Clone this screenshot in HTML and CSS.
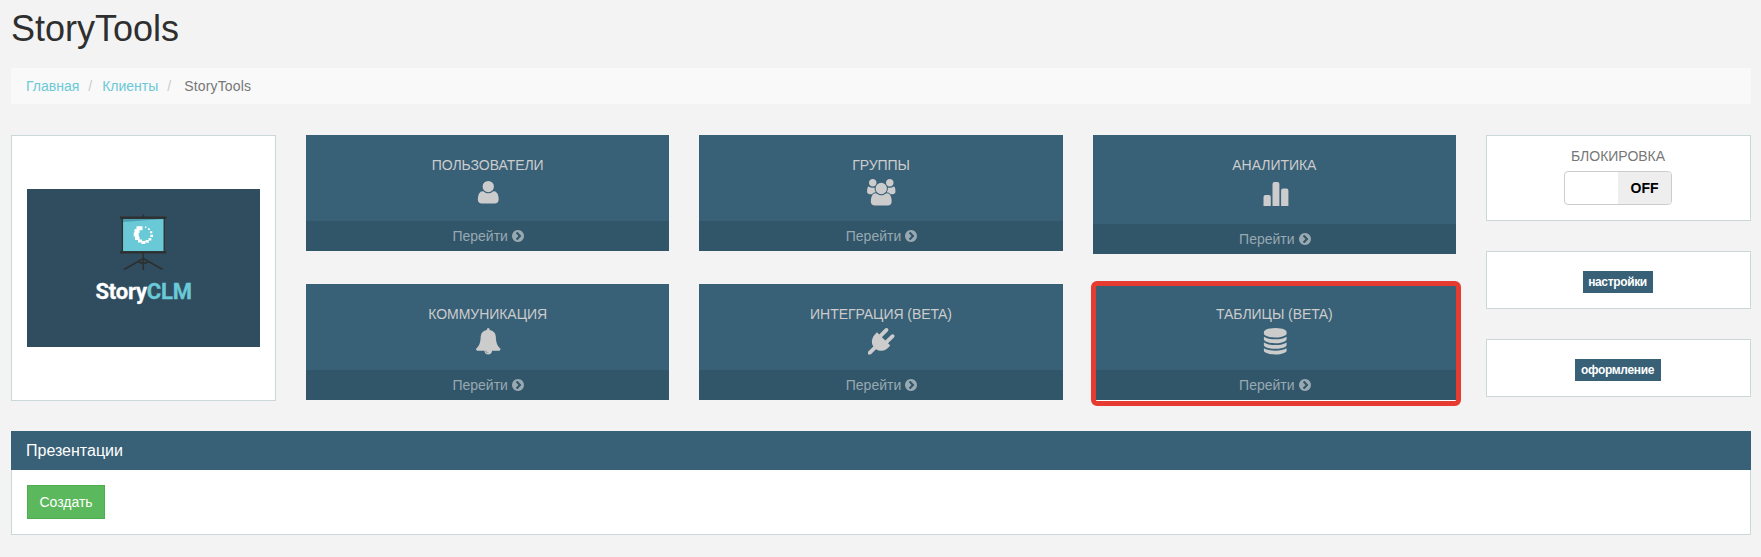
FILE: index.html
```html
<!DOCTYPE html>
<html lang="ru">
<head>
<meta charset="utf-8">
<title>StoryTools</title>
<link rel="stylesheet" href="styles.css">
</head>
<body>
<svg class="defs" width="0" height="0">
  <symbol id="go" viewBox="128 128 1536 1536"><path d="M845 1395l454-454q19-19 19-45t-19-45l-454-454q-19-19-45-19t-45 19l-102 102q-19 19-19 45t19 45l307 307-307 307q-19 19-19 45t19 45l102 102q19 19 45 19t45-19zm819-499q0 209-103 385.500t-279.500 279.500-385.500 103-385.500-103-279.500-279.500-103-385.500 103-385.500 279.500-279.500 385.500-103 385.500 103 279.500 279.500 103 385.500z"/></symbol>
</svg>
<h1 class="title">StoryTools</h1>
<nav class="breadcrumb">
  <a href="#">Главная</a><span class="sep">/</span><a href="#">Клиенты</a><span class="sep sep-last">/</span><span class="current">StoryTools</span>
</nav>
<main class="dashboard">
  <section class="box logo-box">
    <svg class="logo" viewBox="27 189 233 158">
      <path fill="#6ac9d6" d="M122.500 219h41.500v32h-41.500z"/>
      <path fill="#4ca0af" d="M122.500 219h41.500l-41.500 3z"/>
      <g fill="none" stroke="#2e2f2f">
        <path stroke-width="2.300" d="M120 217.700h46.500M120 252.300h46.500"/>
        <path stroke-width="1.300" d="M122.400 218v34M164.200 218v34"/>
        <path stroke-width="1.600" d="M143.300 214.500v3M143.300 253v17M143.300 258.500l-19.300 11M143.300 258.500l19.300 11M138 261.500q5.300 3.500 10.600 0"/>
      </g>
      <g fill="#fff">
        <path d="M136.500 226.200h6v4h-6zM134.500 229h5v4h-5zM133.700 232.500h5v4h-5zM135 236.500h4.500v3.500h-4.500zM138 239.500h4v3h-4zM141.500 241h3.800v3h-3.800zM145.500 240h3.300v2.700h-3.300zM148.500 238h2.800v2.500h-2.800zM150.300 234.700h2.700v2.300h-2.700zM150 231.200h2.300v2h-2.300zM148 228.200h1.800v1.800h-1.800zM145 226.500h1.400v1.400h-1.400z"/>
      </g>
      <text class="logo-text" x="95.400" y="298.900" textLength="96.500">Story<tspan class="logo-accent">CLM</tspan></text>
    </svg>
  </section>
  <section class="cards">
    <a class="card">
      <span class="card-body"><span class="card-title">ПОЛЬЗОВАТЕЛИ</span>
        <svg class="icon" viewBox="0 0 1792 1792"><path d="M1600 1405q0 120-73 189.500t-194 69.500h-874q-121 0-194-69.500t-73-189.500q0-53 3.500-103.500t14-109 26.500-108.500 43-97.500 62-81 85.500-53.500 111.500-20q9 0 42 21.500t74.500 48 108 48 133.500 21.500 133.500-21.500 108-48 74.500-48 42-21.500q61 0 111.500 20t85.500 53.500 62 81 43 97.500 26.500 108.500 14 109 3.500 103.500zm-320-893q0 159-112.500 271.500t-271.500 112.500-271.500-112.500-112.500-271.500 112.500-271.500 271.500-112.500 271.500 112.500 112.500 271.500z"/></svg>
      </span>
      <span class="card-footer">Перейти <svg class="go"><use href="#go"/></svg></span>
    </a>
    <a class="card">
      <span class="card-body"><span class="card-title">ГРУППЫ</span>
        <svg class="icon icon-wide" viewBox="0 0 1920 1792"><path d="M593 896q-162 5-265 128h-134q-82 0-138-40.500t-56-118.500q0-353 124-353 6 0 43.500 21t97.500 42.500 119 21.500q67 0 133-23-5 37-5 66 0 139 81 256zm1071 637q0 120-73 189.500t-194 69.500h-874q-121 0-194-69.500t-73-189.500q0-53 3.500-103.500t14-109 26.500-108.500 43-97.500 62-81 85.500-53.500 111.500-20q10 0 43 21.500t73 48 107 48 135 21.500 135-21.500 107-48 73-48 43-21.500q61 0 111.500 20t85.500 53.500 62 81 43 97.500 26.500 108.500 14 109 3.500 103.500zm-1024-1277q0 106-75 181t-181 75-181-75-75-181 75-181 181-75 181 75 75 181zm704 384q0 159-112.500 271.500t-271.500 112.500-271.500-112.500-112.500-271.500 112.500-271.500 271.500-112.500 271.500 112.500 112.500 271.500zm576 225q0 78-56 118.500t-138 40.500h-134q-103-123-265-128 81-117 81-256 0-29-5-66 66 23 133 23 59 0 119-21.500t97.500-42.500 43.500-21q124 0 124 353zm-128-609q0 106-75 181t-181 75-181-75-75-181 75-181 181-75 181 75 75 181z"/></svg>
      </span>
      <span class="card-footer">Перейти <svg class="go"><use href="#go"/></svg></span>
    </a>
    <a class="card card-tall">
      <span class="card-body"><span class="card-title">АНАЛИТИКА</span>
        <svg class="icon icon-bars" viewBox="0 0 27 27"><path d="M1.500 27V18q0-2 2-2h3.300q2 0 2 2v9zM10.500 27V5q0-2 2-2h2.900q2 0 2 2v22zM19.100 27V11.500q0-2 2-2h3.300q2 0 2 2V27z"/></svg>
      </span>
      <span class="card-footer">Перейти <svg class="go"><use href="#go"/></svg></span>
    </a>
    <a class="card">
      <span class="card-body"><span class="card-title">КОММУНИКАЦИЯ</span>
        <svg class="icon" viewBox="0 0 1792 1792"><path d="M912 1696q0-16-16-16-59 0-101.500-42.500t-42.500-101.500q0-16-16-16t-16 16q0 73 51.500 124.500t124.500 51.500q16 0 16-16zm816-288q0 52-38 90t-90 38h-448q0 106-75 181t-181 75-181-75-75-181h-448q-52 0-90-38t-38-90q50-42 91-88t85-119.500 74.500-158.500 50-206 19.500-260q0-152 117-282.500t307-158.500q-8-19-8-39 0-40 28-68t68-28 68 28 28 68q0 20-8 39 190 28 307 158.500t117 282.500q0 139 19.500 260t50 206 74.500 158.500 85 119.500 91 88z"/></svg>
      </span>
      <span class="card-footer">Перейти <svg class="go"><use href="#go"/></svg></span>
    </a>
    <a class="card">
      <span class="card-body"><span class="card-title">ИНТЕГРАЦИЯ (BETA)</span>
        <svg class="icon" viewBox="0 0 1792 1792"><path d="M1755 453q37 38 37 90.500t-37 90.500l-401 400 150 150-160 160q-163 163-389.500 186.500t-411.500-100.500l-362 362h-181v-181l362-362q-124-185-100.500-411.500t186.500-389.500l160-160 150 150 400-401q38-37 91-37t90 37 37 90.500-37 90.500l-400 401 234 234 401-400q38-37 91-37t90 37z"/></svg>
      </span>
      <span class="card-footer">Перейти <svg class="go"><use href="#go"/></svg></span>
    </a>
    <a class="card card-marked">
      <span class="card-body"><span class="card-title">ТАБЛИЦЫ (BETA)</span>
        <svg class="icon" viewBox="0 0 1792 1792"><path d="M896 768q237 0 443-43t325-127v170q0 69-103 128t-280 93.500-385 34.500-385-34.500-280-93.500-103-128v-170q119 84 325 127t443 43zm0 768q237 0 443-43t325-127v170q0 69-103 128t-280 93.500-385 34.500-385-34.500-280-93.500-103-128v-170q119 84 325 127t443 43zm0-384q237 0 443-43t325-127v170q0 69-103 128t-280 93.500-385 34.500-385-34.500-280-93.500-103-128v-170q119 84 325 127t443 43zm0-1152q208 0 385 34.500t280 93.500 103 128v128q0 69-103 128t-280 93.500-385 34.500-385-34.500-280-93.500-103-128v-128q0-69 103-128t280-93.500 385-34.500z"/></svg>
      </span>
      <span class="card-footer">Перейти <svg class="go"><use href="#go"/></svg></span>
    </a>
  </section>
  <aside class="side">
    <div class="box lock"><span>БЛОКИРОВКА</span><div class="toggle"><span class="toggle-off">OFF</span></div></div>
    <div class="box option"><a class="label label-settings">настройки</a></div>
    <div class="box option"><a class="label label-design">оформление</a></div>
  </aside>
</main>
<section class="panel">
  <h2 class="panel-heading">Презентации</h2>
  <div class="panel-body"><button class="create">Создать</button></div>
</section>
</body>
</html>
```
FILE: styles.css
```css
* { box-sizing: border-box; }
body {
  margin: 0;
  padding: 9px 10px 0 11px;
  background: #f3f3f3;
  color: #777;
  font: 14px/20px "Liberation Sans", Arial, sans-serif;
}
.defs { display: block; }
.title {
  margin: 0 0 19px;
  color: #2e2f2f;
  font-size: 36px;
  font-weight: 400;
  line-height: 40px;
}
.breadcrumb {
  display: flex;
  height: 36px;
  margin-bottom: 31px;
  padding: 8px 15px;
  background: #f9f9f9;
}
.breadcrumb a { color: #6bc9d6; }
.current { letter-spacing: 0.15px; }
a { text-decoration: none; }
.sep { margin: 0 10px 0 9px; color: #ccc; }
.sep-last { margin: 0 13px 0 9px; }
.dashboard {
  display: grid;
  grid-template-columns: 265px 1fr 265px;
  gap: 30px;
  align-items: start;
}
.box { border: 1px solid #cbd8d9; background: #fff; }
.logo-box {
  display: flex;
  align-items: center;
  height: 266px;
  padding: 0 15px;
}
.logo { width: 233px; height: 158px; background: #2f4d5f; }
.logo-text {
  fill: #fff;
  stroke: #fff;
  stroke-width: 0.3px;
  font: 700 22px Roboto, sans-serif;
}
.logo-accent { fill: #6ac9d6; stroke: #6ac9d6; }
.cards {
  display: grid;
  grid-template-columns: repeat(3, 1fr);
  gap: 30px;
  align-items: start;
}
.card { position: relative; color: #ccc; background: #386077; text-align: center; }
.card-body {
  display: flex;
  flex-direction: column;
  align-items: center;
  gap: 4px;
  height: 86px;
  padding-top: 20px;
}
.card-title { letter-spacing: -0.05px; }
.card-tall .card-body { height: 89px; }
.icon { width: 26.5px; height: 26.5px; margin-left: 1px; fill: currentColor; }
.icon-wide { width: 28.5px; }
.icon-bars { width: 27px; height: 27px; margin-left: 2px; }
.card-footer {
  display: flex;
  justify-content: center;
  align-items: center;
  gap: 4px;
  height: 30px;
  padding-left: 1px;
  color: #98a9b2;
  background: #315569;
}
.go { width: 12px; height: 12px; fill: currentColor; }
.card-marked::after {
  content: "";
  position: absolute;
  inset: -3px -5px -6px -2px;
  border: 5px solid #e53b30;
  border-radius: 6px;
}
.card-marked { box-shadow: 0 1px #fff; }
.side { display: grid; gap: 30px; }
.lock {
  display: flex;
  flex-direction: column;
  align-items: center;
  gap: 5px;
  height: 86px;
  padding: 10px 1px 0 0;
}
.toggle {
  display: flex;
  justify-content: flex-end;
  width: 108px;
  height: 34px;
  border: 1px solid #ccc;
  border-radius: 4px;
  overflow: hidden;
}
.toggle-off {
  width: 53px;
  background: #eee;
  color: #000;
  font-weight: 700;
  line-height: 33px;
  text-align: center;
}
.option {
  display: flex;
  justify-content: center;
  height: 58px;
  padding: 19px 2px 0 0;
}
.label {
  height: 22px;
  background: #386077;
  color: #fff;
  font-size: 12px;
  font-weight: 700;
  letter-spacing: -0.35px;
  line-height: 22px;
  text-align: center;
}
.label-settings { width: 70px; }
.label-design { width: 86px; }
.panel { margin-top: 30px; border: 1px solid #cbd8d9; border-top: 0; background: #fff; }
.panel-heading {
  height: 39px;
  margin: 0 -1px;
  padding: 10px 15px 0;
  background: #386077;
  color: #fff;
  font-size: 16px;
  font-weight: 400;
  line-height: 19px;
}
.panel-body { height: 64px; padding: 15px; }
.create {
  display: block;
  width: 78px;
  height: 34px;
  padding: 0;
  border: 1px solid #4cae4c;
  background: #5cb85c;
  color: #fff;
  font: inherit;
}
```
